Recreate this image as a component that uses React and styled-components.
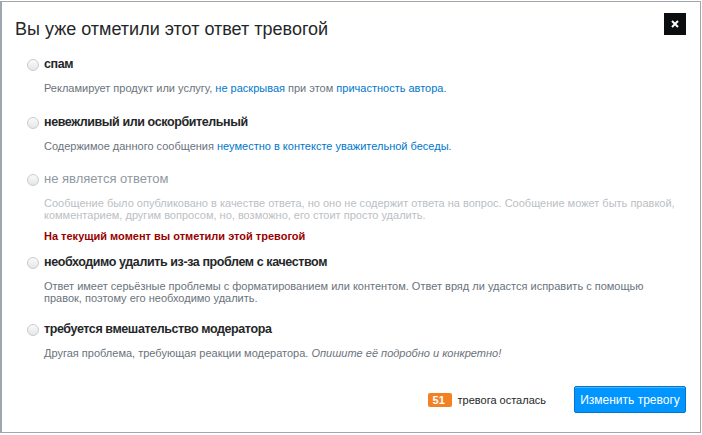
import React from 'react';
import styled, { createGlobalStyle } from 'styled-components';

const GlobalStyle = createGlobalStyle`
    html, body {
        margin: 0;
        padding: 0;
        background: #fff;
    }
    body {
        font-family: "Liberation Sans", Arial, sans-serif;
        color: #242729;
    }
`

const Modal = styled.div`
    box-sizing: border-box;
    margin-top: 1px;
    width: 701px;
    height: 432px;
    border: 1px solid #9fa6ad;
    border-left-width: 2px;
    padding: 11px 14px 19px 13px;
    display: flex;
    flex-direction: column;
    background: #fff;
`

const Header = styled.div`
    display: flex;
    align-items: flex-start;
`

const Title = styled.h1`
    margin: 0;
    padding-top: 4px;
    font-size: 18px;
    line-height: 24px;
    font-weight: normal;
    color: #242729;
`

const CloseButton = styled.button`
    margin-left: auto;
    width: 22px;
    height: 22px;
    padding: 0;
    border: 0;
    background: #0c0d0e;
    display: flex;
    align-items: center;
    justify-content: center;
    cursor: pointer;
`

const List = styled.ul`
    list-style: none;
    margin: 15px 0 0;
    padding: 0 0 0 12px;
`

const Item = styled.li`
    display: flex;
    align-items: flex-start;
    gap: 5px;
    margin-bottom: ${({$gap}) => $gap}px;
`

const Radio = styled.span`
    flex: none;
    box-sizing: border-box;
    width: 12px;
    height: 12px;
    margin-top: 3px;
    border-radius: 50%;
    border: 1px solid #c8ccd0;
    background: linear-gradient(#fafafa, #e4e6e8);
`

const Body = styled.div`
    flex: 1;
`

const Label = styled.div`
    line-height: 16px;
    color: ${({$disabled}) => $disabled ? '#9199a1' : '#242729'};
    font-weight: ${({$disabled}) => $disabled ? 'normal' : 'bold'};
    font-size: ${({$disabled}) => $disabled ? '13px' : '12.5px'};
    letter-spacing: ${({$disabled}) => $disabled ? '0' : '-0.4px'};
`

const Desc = styled.div`
    margin-top: 10px;
    font-size: 11px;
    line-height: 12px;
    color: ${({$disabled}) => $disabled ? '#bbc0c4' : '#6a737c'};
`

const Link = styled.a`
    color: #0077cc;
    text-decoration: none;
`

const Note = styled.div`
    margin-top: 9px;
    font-size: 11px;
    line-height: 12px;
    font-weight: bold;
    color: #990000;
`

const Footer = styled.div`
    margin-top: auto;
    display: flex;
    align-items: center;
    justify-content: flex-end;
`

const Badge = styled.span`
    box-sizing: border-box;
    min-width: 24px;
    height: 14px;
    padding: 0 5px;
    border-radius: 2px;
    background: #f48024;
    color: #fff;
    font-size: 11px;
    line-height: 14px;
    font-weight: bold;
`

const Remaining = styled.span`
    margin-left: 6px;
    font-size: 11px;
    color: #242729;
`

const SubmitButton = styled.button`
    margin-left: 28px;
    width: 112px;
    height: 27px;
    padding: 0;
    border: 1px solid #07c;
    border-radius: 2px;
    background: #0095ff;
    box-shadow: inset 0 1px 0 rgba(102, 191, 255, .75);
    color: #fff;
    font-family: "Liberation Sans", Arial, sans-serif;
    font-size: 12px;
    cursor: pointer;
`

function Option({label, children, disabled, note, gap = 19}) {
    return (
        <Item $gap={gap}>
            <Radio />
            <Body>
                <Label $disabled={disabled}>{label}</Label>
                <Desc $disabled={disabled}>{children}</Desc>
                {note && <Note>{note}</Note>}
            </Body>
        </Item>
    )
}

export default function App() {
    return (
        <>
            <GlobalStyle />
            <Modal>
                <Header>
                    <Title>Вы уже отметили этот ответ тревогой</Title>
                    <CloseButton aria-label="закрыть">
                        <svg width="8" height="8" viewBox="0 0 8 8">
                            <path d="M1 1L7 7M7 1L1 7" stroke="#fff" strokeWidth="2" />
                        </svg>
                    </CloseButton>
                </Header>
                <List>
                    <Option label="спам" gap={20}>
                        Рекламирует продукт или услугу, <Link href="#">не раскрывая</Link> при этом <Link href="#">причастность автора</Link>.
                    </Option>
                    <Option label="невежливый или оскорбительный">
                        Содержимое данного сообщения <Link href="#">неуместно в контексте уважительной беседы</Link>.
                    </Option>
                    <Option
                        label="не является ответом"
                        disabled
                        note="На текущий момент вы отметили этой тревогой"
                        gap={12}
                    >
                        Сообщение было опубликовано в качестве ответа, но оно не содержит ответа на вопрос. Сообщение может быть правкой,<br />
                        комментарием, другим вопросом, но, возможно, его стоит просто удалить.
                    </Option>
                    <Option label="необходимо удалить из-за проблем с качеством" gap={17}>
                        Ответ имеет серьёзные проблемы с форматированием или контентом. Ответ вряд ли удастся исправить с помощью<br />
                        правок, поэтому его необходимо удалить.
                    </Option>
                    <Option label="требуется вмешательство модератора" gap={0}>
                        Другая проблема, требующая реакции модератора. <em>Опишите её подробно и конкретно!</em>
                    </Option>
                </List>
                <Footer>
                    <Badge>51</Badge>
                    <Remaining>тревога осталась</Remaining>
                    <SubmitButton>Изменить тревогу</SubmitButton>
                </Footer>
            </Modal>
        </>
    )
}
